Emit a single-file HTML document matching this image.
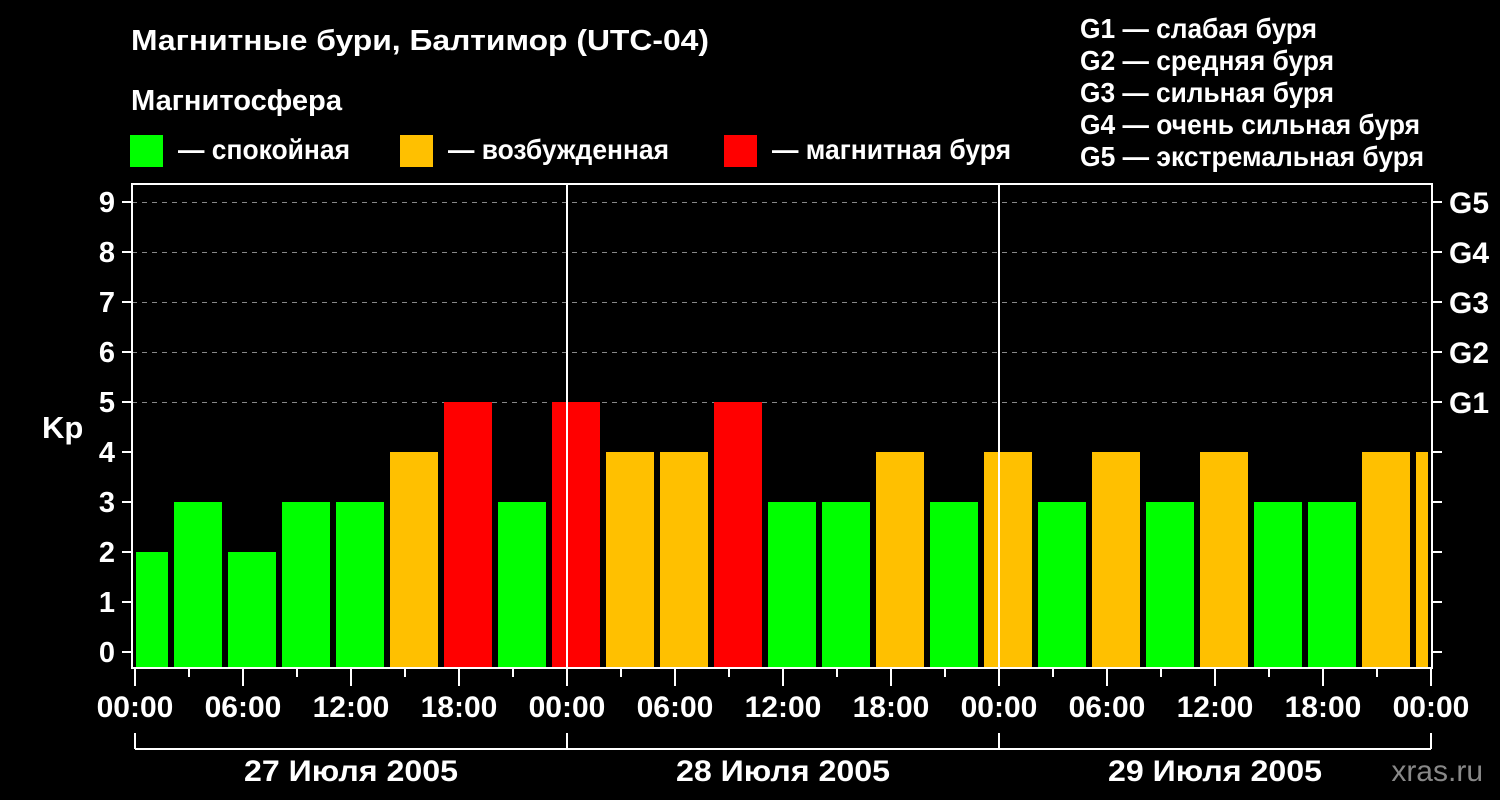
<!DOCTYPE html>
<html><head><meta charset="utf-8"><style>
html,body{margin:0;padding:0;background:#000;}
svg{display:block}
text{font-family:"Liberation Sans",Arial,sans-serif;font-weight:bold;fill:#fff;}
</style></head><body>
<svg width="1500" height="800" viewBox="0 0 1500 800" xmlns="http://www.w3.org/2000/svg">
<rect width="1500" height="800" fill="#000"/>
<text x="131" y="50" font-size="29" textLength="578" lengthAdjust="spacingAndGlyphs">Магнитные бури, Балтимор (UTC-04)</text>
<text x="131" y="110" font-size="29" textLength="211" lengthAdjust="spacingAndGlyphs">Магнитосфера</text>
<rect x="130" y="135" width="33" height="32" fill="#00ff00"/>
<text x="178" y="159" font-size="28" textLength="172" lengthAdjust="spacingAndGlyphs">— спокойная</text>
<rect x="400" y="135" width="33" height="32" fill="#ffc000"/>
<text x="448" y="159" font-size="28" textLength="221" lengthAdjust="spacingAndGlyphs">— возбужденная</text>
<rect x="724" y="135" width="33" height="32" fill="#ff0000"/>
<text x="772" y="159" font-size="28" textLength="239" lengthAdjust="spacingAndGlyphs">— магнитная буря</text>
<g font-size="28">
<text x="1080" y="38" textLength="237" lengthAdjust="spacingAndGlyphs">G1 — слабая буря</text>
<text x="1080" y="70" textLength="254" lengthAdjust="spacingAndGlyphs">G2 — средняя буря</text>
<text x="1080" y="102" textLength="254" lengthAdjust="spacingAndGlyphs">G3 — сильная буря</text>
<text x="1080" y="134" textLength="340" lengthAdjust="spacingAndGlyphs">G4 — очень сильная буря</text>
<text x="1080" y="166" textLength="344" lengthAdjust="spacingAndGlyphs">G5 — экстремальная буря</text>
</g>
<g stroke="#888" stroke-width="1" stroke-dasharray="5,5">
<line x1="132" y1="202.5" x2="1432" y2="202.5"/>
<line x1="132" y1="252.5" x2="1432" y2="252.5"/>
<line x1="132" y1="302.5" x2="1432" y2="302.5"/>
<line x1="132" y1="352.5" x2="1432" y2="352.5"/>
<line x1="132" y1="402.5" x2="1432" y2="402.5"/>
</g>
<g>
<rect x="136" y="552" width="32" height="116" fill="#00ff00"/>
<rect x="174" y="502" width="48" height="166" fill="#00ff00"/>
<rect x="228" y="552" width="48" height="116" fill="#00ff00"/>
<rect x="282" y="502" width="48" height="166" fill="#00ff00"/>
<rect x="336" y="502" width="48" height="166" fill="#00ff00"/>
<rect x="390" y="452" width="48" height="216" fill="#ffc000"/>
<rect x="444" y="402" width="48" height="266" fill="#ff0000"/>
<rect x="498" y="502" width="48" height="166" fill="#00ff00"/>
<rect x="552" y="402" width="48" height="266" fill="#ff0000"/>
<rect x="606" y="452" width="48" height="216" fill="#ffc000"/>
<rect x="660" y="452" width="48" height="216" fill="#ffc000"/>
<rect x="714" y="402" width="48" height="266" fill="#ff0000"/>
<rect x="768" y="502" width="48" height="166" fill="#00ff00"/>
<rect x="822" y="502" width="48" height="166" fill="#00ff00"/>
<rect x="876" y="452" width="48" height="216" fill="#ffc000"/>
<rect x="930" y="502" width="48" height="166" fill="#00ff00"/>
<rect x="984" y="452" width="48" height="216" fill="#ffc000"/>
<rect x="1038" y="502" width="48" height="166" fill="#00ff00"/>
<rect x="1092" y="452" width="48" height="216" fill="#ffc000"/>
<rect x="1146" y="502" width="48" height="166" fill="#00ff00"/>
<rect x="1200" y="452" width="48" height="216" fill="#ffc000"/>
<rect x="1254" y="502" width="48" height="166" fill="#00ff00"/>
<rect x="1308" y="502" width="48" height="166" fill="#00ff00"/>
<rect x="1362" y="452" width="48" height="216" fill="#ffc000"/>
<rect x="1416" y="452" width="12" height="216" fill="#ffc000"/>
</g>
<rect x="132" y="184" width="1300" height="484" fill="none" stroke="#fff" stroke-width="2"/>
<line x1="567" y1="183" x2="567" y2="668" stroke="#fff" stroke-width="2"/>
<line x1="999" y1="183" x2="999" y2="668" stroke="#fff" stroke-width="2"/>
<g stroke="#fff" stroke-width="2">
<line x1="122" y1="202" x2="131" y2="202"/><line x1="122" y1="252" x2="131" y2="252"/>
<line x1="122" y1="302" x2="131" y2="302"/><line x1="122" y1="352" x2="131" y2="352"/>
<line x1="122" y1="402" x2="131" y2="402"/><line x1="122" y1="452" x2="131" y2="452"/>
<line x1="122" y1="502" x2="131" y2="502"/><line x1="122" y1="552" x2="131" y2="552"/>
<line x1="122" y1="602" x2="131" y2="602"/><line x1="122" y1="652" x2="131" y2="652"/>
<line x1="1433" y1="202" x2="1442" y2="202"/><line x1="1433" y1="252" x2="1442" y2="252"/>
<line x1="1433" y1="302" x2="1442" y2="302"/><line x1="1433" y1="352" x2="1442" y2="352"/>
<line x1="1433" y1="402" x2="1442" y2="402"/><line x1="1433" y1="452" x2="1442" y2="452"/>
<line x1="1433" y1="502" x2="1442" y2="502"/><line x1="1433" y1="552" x2="1442" y2="552"/>
<line x1="1433" y1="602" x2="1442" y2="602"/><line x1="1433" y1="652" x2="1442" y2="652"/>
</g>
<g font-size="29" text-anchor="end">
<text x="115" y="212">9</text><text x="115" y="262">8</text><text x="115" y="312">7</text>
<text x="115" y="362">6</text><text x="115" y="412">5</text><text x="115" y="462">4</text>
<text x="115" y="512">3</text><text x="115" y="562">2</text><text x="115" y="612">1</text>
<text x="115" y="662">0</text>
</g>
<text x="42" y="438" font-size="31">Kp</text>
<g font-size="30">
<text x="1449" y="213">G5</text><text x="1449" y="263">G4</text><text x="1449" y="313">G3</text>
<text x="1449" y="363">G2</text><text x="1449" y="413">G1</text>
</g>
<g stroke="#fff" stroke-width="2">
<line x1="135" y1="669" x2="135" y2="686"/><line x1="189" y1="669" x2="189" y2="677"/>
<line x1="243" y1="669" x2="243" y2="686"/><line x1="297" y1="669" x2="297" y2="677"/>
<line x1="351" y1="669" x2="351" y2="686"/><line x1="405" y1="669" x2="405" y2="677"/>
<line x1="459" y1="669" x2="459" y2="686"/><line x1="513" y1="669" x2="513" y2="677"/>
<line x1="567" y1="669" x2="567" y2="686"/><line x1="621" y1="669" x2="621" y2="677"/>
<line x1="675" y1="669" x2="675" y2="686"/><line x1="729" y1="669" x2="729" y2="677"/>
<line x1="783" y1="669" x2="783" y2="686"/><line x1="837" y1="669" x2="837" y2="677"/>
<line x1="891" y1="669" x2="891" y2="686"/><line x1="945" y1="669" x2="945" y2="677"/>
<line x1="999" y1="669" x2="999" y2="686"/><line x1="1053" y1="669" x2="1053" y2="677"/>
<line x1="1107" y1="669" x2="1107" y2="686"/><line x1="1161" y1="669" x2="1161" y2="677"/>
<line x1="1215" y1="669" x2="1215" y2="686"/><line x1="1269" y1="669" x2="1269" y2="677"/>
<line x1="1323" y1="669" x2="1323" y2="686"/><line x1="1377" y1="669" x2="1377" y2="677"/>
<line x1="1431" y1="669" x2="1431" y2="686"/>
</g>
<g font-size="30" text-anchor="middle">
<text x="135" y="717">00:00</text><text x="243" y="717">06:00</text><text x="351" y="717">12:00</text><text x="459" y="717">18:00</text>
<text x="567" y="717">00:00</text><text x="675" y="717">06:00</text><text x="783" y="717">12:00</text><text x="891" y="717">18:00</text>
<text x="999" y="717">00:00</text><text x="1107" y="717">06:00</text><text x="1215" y="717">12:00</text><text x="1323" y="717">18:00</text>
<text x="1431" y="717">00:00</text>
</g>
<g stroke="#fff" stroke-width="2">
<line x1="135" y1="749" x2="1431" y2="749"/>
<line x1="135" y1="733" x2="135" y2="749"/><line x1="567" y1="733" x2="567" y2="749"/>
<line x1="999" y1="733" x2="999" y2="749"/><line x1="1431" y1="733" x2="1431" y2="749"/>
</g>
<g font-size="30" text-anchor="middle">
<text x="351" y="781" textLength="214" lengthAdjust="spacingAndGlyphs">27 Июля 2005</text>
<text x="783" y="781" textLength="214" lengthAdjust="spacingAndGlyphs">28 Июля 2005</text>
<text x="1215" y="781" textLength="214" lengthAdjust="spacingAndGlyphs">29 Июля 2005</text>
</g>
<text x="1483" y="781" font-size="30" text-anchor="end" style="font-weight:normal;fill:#888">xras.ru</text>
</svg>
</body></html>
